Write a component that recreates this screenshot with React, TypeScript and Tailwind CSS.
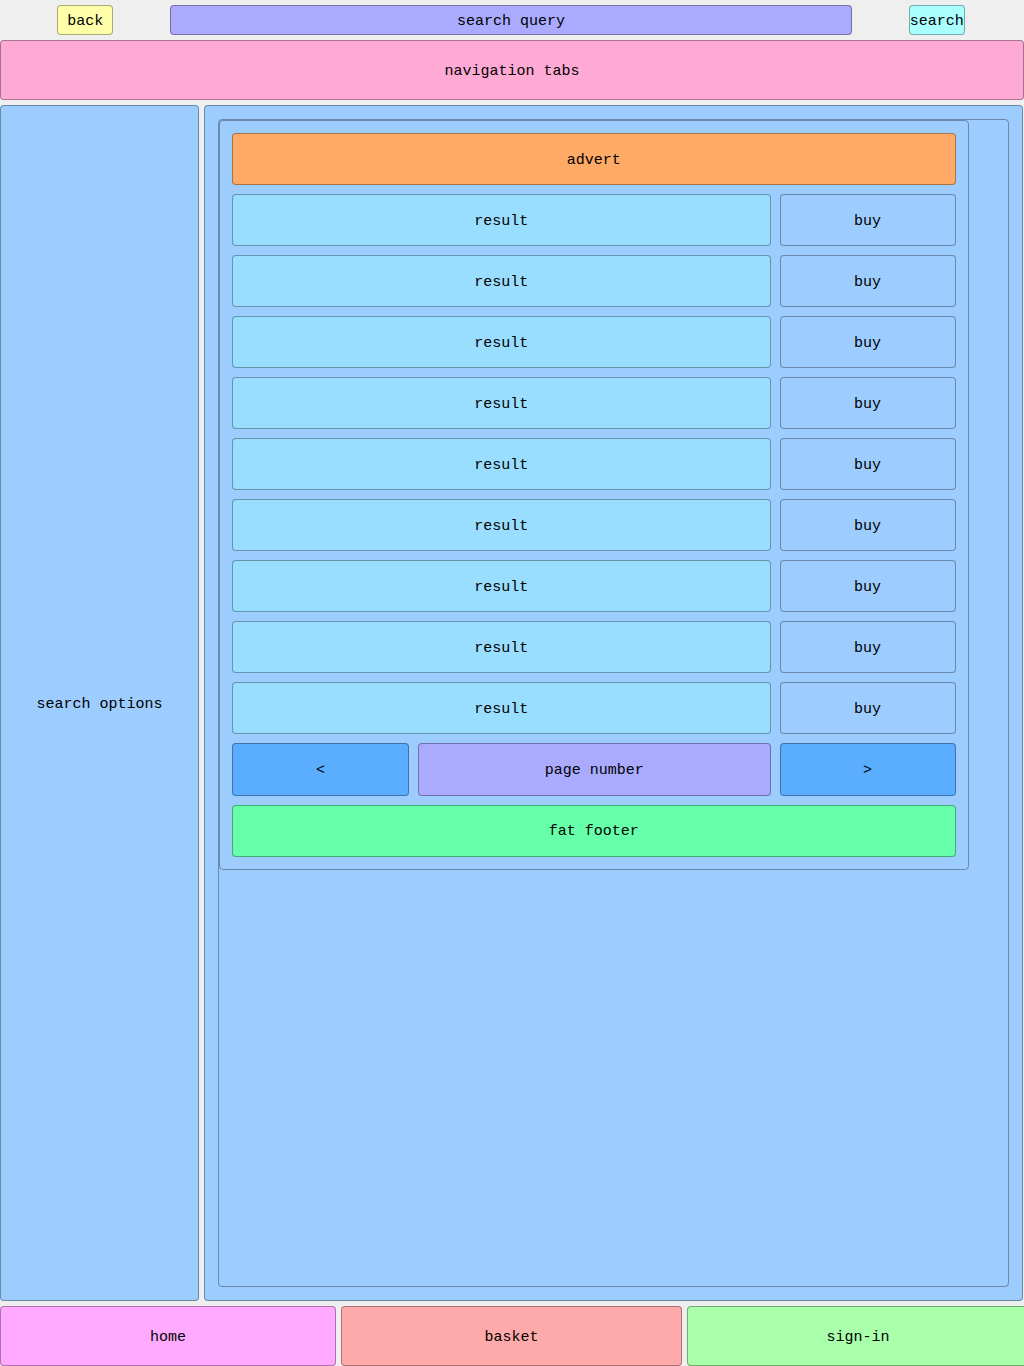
const box = 'flex items-center justify-center rounded border border-black/33 pt-[3px]';

const results = Array.from({ length: 9 }, (_, i) => i + 1);

function Result() {
  return (
    <>
      <article className={`${box} col-span-2 bg-[#99ddff]`}>result</article>
      <button type="button" className={`${box} bg-[#9dccff]`}>buy</button>
    </>
  );
}

export default function App() {
  return (
    <div className="flex min-h-screen flex-col gap-[5px] overflow-hidden bg-[#efefef] pt-[5px] font-['Liberation_Mono',monospace] text-[15px] leading-5 text-black">
      <header className="flex h-[30px] justify-evenly pr-0.5">
        <button type="button" className={`${box} w-14 bg-[#ffffaa]`}>back</button>
        <input
          type="text"
          aria-label="search query"
          placeholder="search query"
          className="w-2/3 rounded border border-black/33 bg-[#aaaaff] pt-[3px] text-center placeholder:text-black"
        />
        <button type="button" className={`${box} w-14 bg-[#aaffff]`}>search</button>
      </header>

      <nav className={`${box} h-[60px] bg-[#ffaad4]`}>navigation tabs</nav>

      <div className="mr-px flex flex-1 gap-[5px]">
        <aside className={`${box} w-[199px] shrink-0 bg-[#9dccff]`}>search options</aside>
        <main className="flex flex-1 rounded border border-black/33 bg-[#9dccff] p-[13px]">
          <div className="flex-1 rounded border border-black/33">
            <section className="grid aspect-square w-[95%] auto-rows-fr grid-cols-[177fr_353fr_176fr] gap-[9px] rounded border border-black/33 p-3">
              <div className={`${box} col-span-3 bg-[#ffaa66]`}>advert</div>
              {results.map((n) => (
                <Result key={n} />
              ))}
              <button type="button" aria-label="previous page" className={`${box} bg-[#5baeff]`}>&lt;</button>
              <div className={`${box} bg-[#aaaaff]`}>page number</div>
              <button type="button" aria-label="next page" className={`${box} bg-[#5baeff]`}>&gt;</button>
              <div className={`${box} col-span-3 bg-[#66ffaa]`}>fat footer</div>
            </section>
          </div>
        </main>
      </div>

      <footer className="-mr-[5px] grid h-[60px] grid-cols-[336fr_341fr_342fr] gap-[5px]">
        <button type="button" className={`${box} bg-[#ffaaff]`}>home</button>
        <button type="button" className={`${box} bg-[#ffaaaa]`}>basket</button>
        <button type="button" className={`${box} bg-[#aaffaa]`}>sign-in</button>
      </footer>
    </div>
  );
}
